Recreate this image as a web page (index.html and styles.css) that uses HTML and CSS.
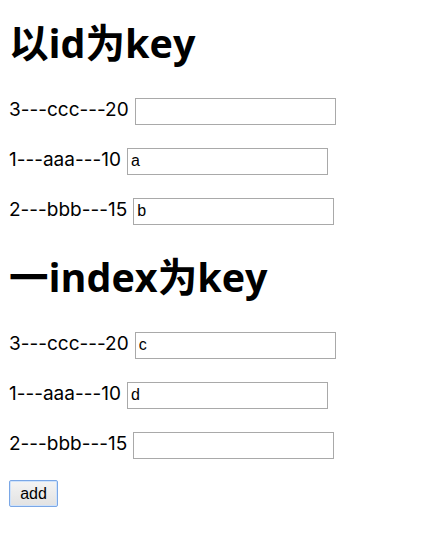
FILE: index.html
```html
<!DOCTYPE html>
<html lang="zh-CN">
<head>
<meta charset="utf-8">
<title>key demo</title>
<link rel="stylesheet" href="styles.css">
</head>
<body>
<main class="page">
  <section class="group">
    <h1 class="title">以id为key</h1>
    <ul class="list">
      <li class="item"><span class="label">3---ccc---20</span><input class="field" type="text" value=""></li>
      <li class="item"><span class="label">1---aaa---10</span><input class="field" type="text" value="a"></li>
      <li class="item"><span class="label">2---bbb---15</span><input class="field" type="text" value="b"></li>
    </ul>
  </section>
  <section class="group">
    <h1 class="title">一index为key</h1>
    <ul class="list">
      <li class="item"><span class="label">3---ccc---20</span><input class="field" type="text" value="c"></li>
      <li class="item"><span class="label">1---aaa---10</span><input class="field" type="text" value="d"></li>
      <li class="item"><span class="label">2---bbb---15</span><input class="field" type="text" value=""></li>
    </ul>
  </section>
  <div class="actions"><button class="add" type="button">add</button></div>
</main>
</body>
</html>
```
FILE: styles.css
```css
html, body {
  margin: 0;
  padding: 0;
  background: #ffffff;
}
.page {
  padding: 18px 9px 20px 9px;
  font-family: "Open Sans", "Noto Sans CJK SC", sans-serif;
  color: #000000;
}
.title {
  margin: 0;
  font-size: 39.5px;
  line-height: 50px;
  font-weight: 700;
  letter-spacing: 0;
}
.list {
  list-style: none;
  margin: 0;
  padding: 5px 0 0 0;
}
.item {
  display: flex;
  align-items: baseline;
  gap: 6px;
  height: 27px;
  margin-top: 23px;
}
.label {
  font-family: Inter, "Noto Sans CJK SC", sans-serif;
  font-size: 19px;
  line-height: 27px;
  letter-spacing: 0;
}
.field {
  box-sizing: border-box;
  width: 201px;
  height: 27px;
  margin: 0;
  padding: 0 3px;
  border: 1px solid #a9a9a9;
  border-radius: 0;
  background: #ffffff;
  font-family: "Liberation Sans", Arial, sans-serif;
  font-size: 16px;
  color: #000000;
  outline: none;
}
.group + .group {
  margin-top: 29px;
}
.actions {
  margin-top: 23px;
}
.add {
  box-sizing: border-box;
  width: 49px;
  height: 27px;
  margin: 0;
  padding: 0;
  border: 1px solid #7aa7e6;
  border-radius: 2px;
  background: linear-gradient(#f4f4f4, #e2e2e2);
  font-family: "Liberation Sans", Arial, sans-serif;
  font-size: 16px;
  color: #000000;
  box-shadow: inset 0 0 0 1px #cfe2fa;
}
```
